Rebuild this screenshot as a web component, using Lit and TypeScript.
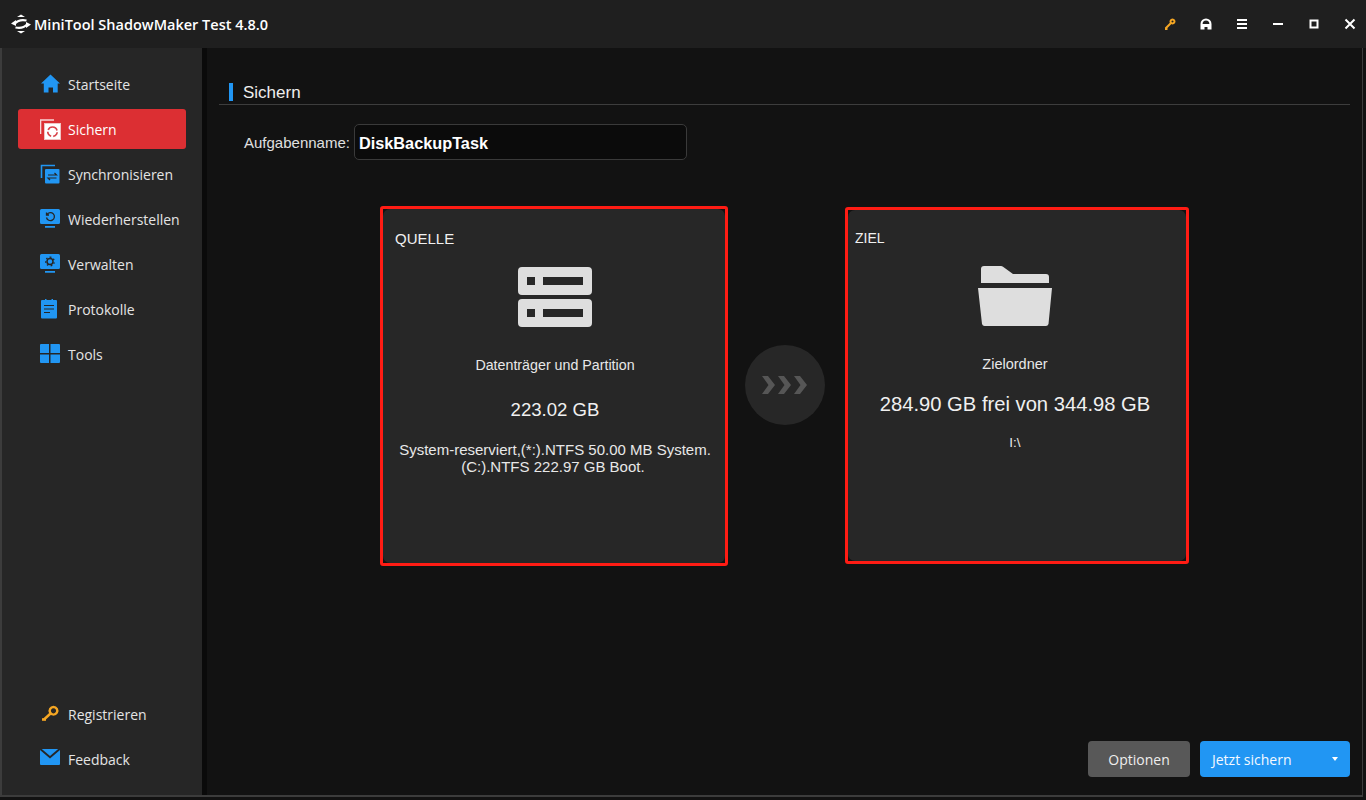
import { LitElement, css, html, svg, unsafeCSS } from "lit";
import { customElement } from "lit/decorators.js";

const BLUE = "#2196f3";

const navIcons: Record<string, unknown> = {
  home: svg`<path fill="${BLUE}" d="M10.500 .500 20 9.500h-2.300v9h-4.700V13.500H8.500v5H3.800v-9H1z"/>`,
  backup: svg`<path fill="none" stroke="#fff" stroke-opacity=".8" stroke-width="1.600" d="M.500 15V1H14"/><rect x="4.500" y="4.500" width="16" height="16" fill="#fff" stroke="#f0c4c4"/><path fill="none" stroke="#d8434a" stroke-width="1.700" stroke-dasharray="6 1.800" d="M12.500 8a4.700 4.700 0 1 1-.01 0"/>`,
  sync: svg`<path fill="none" stroke="${BLUE}" stroke-width="1.600" d="M1.500 14V1.500H15"/><rect x="5" y="5" width="14.500" height="14.500" rx="1" fill="${BLUE}"/><path fill="none" stroke="#262626" stroke-width="1.200" d="M8 11h8.500l-2-2M16.500 14H8l2 2"/>`,
  restore: svg`<path fill="${BLUE}" d="M1.500 0h17A1.500 1.500 0 0 1 20 1.500v12a1.500 1.500 0 0 1-1.500 1.500h-17A1.500 1.500 0 0 1 0 13.500v-12A1.500 1.500 0 0 1 1.500 0zM5 17h10v1.800H5z"/><path fill="none" stroke="#262626" stroke-width="1.300" d="M7 5.500a4 4 0 1 1-.5 3M6.500 3.500v2.500h2.500"/>`,
  manage: svg`<path fill="${BLUE}" d="M1.500 0h17A1.500 1.500 0 0 1 20 1.500v12a1.500 1.500 0 0 1-1.500 1.500h-17A1.500 1.500 0 0 1 0 13.500v-12A1.500 1.500 0 0 1 1.500 0zM5 17h10v1.800H5z"/><circle cx="10" cy="7.500" r="3" fill="none" stroke="#262626" stroke-width="1.500"/><path fill="none" stroke="#262626" stroke-width="1.300" stroke-dasharray="1.500 2.200" d="M10 3.200a4.300 4.300 0 1 1-.01 0"/>`,
  logs: svg`<path fill="${BLUE}" d="M2 1h3V0h1.500v1h5V0H13v1h3a1 1 0 0 1 1 1v16.500a1 1 0 0 1-1 1H2a1 1 0 0 1-1-1V2a1 1 0 0 1 1-1z"/><path stroke="#262626" stroke-width="1.200" d="M4 6.500h10M4 10h10M4 13.500h6"/>`,
  tools: svg`<path fill="${BLUE}" d="M1 0h8v9H0V1a1 1 0 0 1 1-1zM10.500 0H19a1 1 0 0 1 1 1v8h-9.500zM0 10.500h9V19H1a1 1 0 0 1-1-1zM10.500 10.500H20V18a1 1 0 0 1-1 1h-8.500z"/>`,
  key: svg`<path fill="none" stroke="#f5a623" stroke-width="2.400" d="M13.500 3a3.800 3.800 0 1 1-.01 0zM10.500 9.500 4 15.500"/><path fill="none" stroke="#f5a623" stroke-width="2.600" d="M2 15.500h4"/>`,
  mail: svg`<path fill="${BLUE}" d="M0 1 10 9.500 20 1v14a1 1 0 0 1-1 1H1a1 1 0 0 1-1-1z"/><path fill="${BLUE}" d="M1.800 0h16.400L10 7z"/>`,
};

const navTop = [
  { key: "home", label: "Startseite" },
  { key: "backup", label: "Sichern", active: true },
  { key: "sync", label: "Synchronisieren" },
  { key: "restore", label: "Wiederherstellen" },
  { key: "manage", label: "Verwalten" },
  { key: "logs", label: "Protokolle" },
  { key: "tools", label: "Tools" },
];

const navBottom = [
  { key: "key", label: "Registrieren" },
  { key: "mail", label: "Feedback" },
];

@customElement("app-root")
export class AppRoot extends LitElement {
  static styles = css`
    :host {
      display: flex;
      flex-direction: column;
      width: 1366px;
      height: 800px;
      overflow: hidden;
      background: #121212;
      color: #e6e6e6;
      font-family: "Liberation Sans", sans-serif;
    }

    /* title bar */
    .titlebar {
      height: 48px;
      flex: none;
      display: flex;
      align-items: center;
      background: #1f1f1f;
      padding-left: 11px;
    }

    .titlebar .title {
      margin-left: 3px;
      font-family: "Open Sans", sans-serif;
      font-weight: 600;
      font-size: 14.5px;
      color: #fff;
      white-space: nowrap;
    }

    .win-btns {
      margin-left: auto;
      display: flex;
      align-items: center;
      padding-right: 10px;
      gap: 24px;
    }

    .win-btns svg {
      display: block;
      width: 12px;
      height: 12px;
    }

    /* body */
    .body {
      flex: 1;
      display: flex;
      min-height: 0;
      margin: 0 3px 3px 0;
      border-bottom: 2px solid #3c3c3c;
      border-right: 1px solid #3c3c3c;
    }

    .sidebar {
      width: 207px;
      flex: none;
      box-sizing: border-box;
      display: flex;
      flex-direction: column;
      justify-content: space-between;
      padding: 16px 16px 16px;
      background: #262626;
      border-left: 2px solid #3c3c3c;
      border-right: 5px solid #0a0a0a;
    }

    .nav {
      display: flex;
      flex-direction: column;
      gap: 5px;
    }

    .item {
      height: 40px;
      display: flex;
      align-items: center;
      border-radius: 3px;
      padding-left: 22px;
      font-family: "Open Sans", sans-serif;
      font-size: 14px;
      color: #e4e4e4;
      white-space: nowrap;
    }

    .item.active {
      background: #dc2f33;
      color: #fff;
    }

    .item svg {
      width: 21px;
      height: 21px;
      flex: none;
      margin-right: 7px;
    }

    /* main */
    .main {
      flex: 1;
      min-width: 0;
      display: flex;
      flex-direction: column;
      padding: 32px 12px 18px;
    }

    .heading {
      display: flex;
      align-items: center;
      gap: 10px;
      height: 24px;
      padding-left: 10px;
      border-bottom: 1px solid #3d3d3d;
      font-size: 17px;
      color: #eee;
    }

    .heading::before {
      content: "";
      width: 4px;
      height: 18px;
      background: ${unsafeCSS(BLUE)};
    }

    .heading span {
      padding-top: 1px;
    }

    .task {
      display: flex;
      align-items: center;
      gap: 4px;
      margin: 19px 0 0 25px;
      font-size: 15px;
      color: #e0e0e0;
    }

    .task .field {
      width: 333px;
      height: 36px;
      box-sizing: border-box;
      display: flex;
      align-items: center;
      padding: 2px 0 0 4px;
      border: 1px solid #3a3a3a;
      border-radius: 5px;
      background: #0b0b0b;
      font-size: 16.3px;
      font-weight: 700;
      color: #fff;
    }

    .panels {
      display: flex;
      align-items: flex-start;
      margin: 46px 0 0 161px;
    }

    .card {
      box-sizing: border-box;
      border: 3px solid #ff1c14;
      border-radius: 3px;
      background: #121212;
      flex: none;
    }

    .card .inner {
      box-sizing: border-box;
      height: 100%;
      display: flex;
      flex-direction: column;
      align-items: center;
      border-radius: 7px;
      background: #272727;
      text-align: center;
    }

    .card.source {
      width: 348px;
      height: 360px;
    }

    .card.source .inner {
      padding-left: 2px;
    }

    .card.target {
      width: 344px;
      height: 357px;
      margin-top: 1px;
    }

    .card.target .inner {
      padding-right: 4px;
    }

    .card h3 {
      align-self: flex-start;
      margin: 0;
      font-weight: 400;
      line-height: 16px;
      color: #f0f0f0;
    }

    .source h3 {
      padding: 22px 0 0 10px;
      font-size: 15px;
    }

    .target h3 {
      padding: 20px 0 0 7px;
      font-size: 14px;
    }

    .card .glyph {
      display: block;
      width: 74px;
      height: 60px;
      margin-top: 20px;
      flex: none;
    }

    .card .kind {
      margin-top: 30px;
      line-height: 16px;
      color: #e8e8e8;
    }

    .source .kind {
      font-size: 14.25px;
    }

    .target .kind {
      font-size: 14.5px;
    }

    .card .size {
      color: #f0f0f0;
    }

    .source .size {
      margin-top: 26px;
      font-size: 18.6px;
      line-height: 21px;
    }

    .target .size {
      margin-top: 21px;
      font-size: 20.2px;
      line-height: 23px;
    }

    .card .detail {
      line-height: 17px;
      color: #e8e8e8;
    }

    .source .detail {
      margin-top: 21px;
      font-size: 15px;
    }

    .target .detail {
      margin-top: 18px;
      font-size: 13.5px;
    }

    .arrow {
      flex: none;
      width: 80px;
      height: 80px;
      margin: 139px 20px 0 17px;
      border-radius: 50%;
      background: #272727;
      display: flex;
      align-items: center;
      justify-content: center;
    }

    .arrow svg {
      display: block;
      width: 46px;
      height: 18px;
    }

    .actions {
      margin-top: auto;
      display: flex;
      justify-content: flex-end;
      gap: 10px;
    }

    .btn {
      height: 36px;
      box-sizing: border-box;
      display: flex;
      align-items: center;
      border-radius: 4px;
      font-family: "Open Sans", sans-serif;
      font-size: 14px;
      color: #eee;
    }

    .btn.options {
      width: 102px;
      justify-content: center;
      background: #585858;
    }

    .btn.primary {
      width: 150px;
      padding: 0 12px;
      justify-content: space-between;
      background: ${unsafeCSS(BLUE)};
      color: #f4f9ff;
    }

    .btn .caret {
      width: 0;
      height: 0;
      border-left: 3.5px solid transparent;
      border-right: 3.5px solid transparent;
      border-top: 4.5px solid #fff;
    }
  `;

  private renderItem(item: { key: string; label: string; active?: boolean }) {
    return html`
      <div class="item ${item.active ? "active" : ""}">
        <svg viewBox="0 0 21 21">${navIcons[item.key]}</svg>
        ${item.label}
      </div>
    `;
  }

  render() {
    return html`
      <div class="titlebar">
        <svg width="20" height="20" viewBox="0 0 20 20">
          <path fill="none" stroke="#fff" stroke-width="2" d="M4 9.500Q8 5 15.500 6.500M16 10.500Q12 15 4.500 13.500"/>
          <path fill="#fff" d="M10 .500l4 2.500H6zM10 19.500l4-2.500H6zM0 9.500l5-3.500v6zM20 10.500l-5 3.500V8z"/>
        </svg>
        <span class="title">MiniTool ShadowMaker Test 4.8.0</span>
        <div class="win-btns">
          <svg viewBox="0 0 12 12"><path fill="none" stroke="#f5a623" stroke-width="2" d="M8.500 1.500a2 2 0 1 1-.01 0zM6.500 5.500 1.500 10.500M1 11h2.500"/></svg>
          <svg viewBox="0 0 12 12"><path fill="#fff" fill-rule="evenodd" d="M6 .500A5.500 5.500 0 0 1 11.500 6v5.500h-4V9h-3v2.500h-4V6A5.500 5.500 0 0 1 6 .500zM6 2.500A3.500 3.500 0 0 0 2.600 6h6.800A3.500 3.500 0 0 0 6 2.500z"/></svg>
          <svg viewBox="0 0 12 12"><path stroke="#fff" stroke-width="2" d="M1 2h10M1 6h10M1 10h10"/></svg>
          <svg viewBox="0 0 12 12"><path stroke="#fff" stroke-width="2" d="M1 6h10"/></svg>
          <svg viewBox="0 0 12 12"><rect x="2.500" y="2.500" width="7" height="7" fill="none" stroke="#fff" stroke-width="2"/></svg>
          <svg viewBox="0 0 12 12"><path stroke="#fff" stroke-width="2" d="M1.500 1.500l9 9M10.500 1.500l-9 9"/></svg>
        </div>
      </div>
      <div class="body">
        <aside class="sidebar">
          <div class="nav">${navTop.map((i) => this.renderItem(i))}</div>
          <div class="nav">${navBottom.map((i) => this.renderItem(i))}</div>
        </aside>
        <main class="main">
          <div class="heading"><span>Sichern</span></div>
          <div class="task">
            <span>Aufgabenname:</span>
            <div class="field">DiskBackupTask</div>
          </div>
          <div class="panels">
            <section class="card source">
              <div class="inner">
                <h3>QUELLE</h3>
                <svg class="glyph" viewBox="0 0 74 60">
                  <path fill="#dedede" fill-rule="evenodd" d="M4 0h66a4 4 0 0 1 4 4v20a4 4 0 0 1-4 4H4a4 4 0 0 1-4-4V4a4 4 0 0 1 4-4zm5 10v8h8v-8zm16 0v8h40v-8zM4 32h66a4 4 0 0 1 4 4v20a4 4 0 0 1-4 4H4a4 4 0 0 1-4-4V36a4 4 0 0 1 4-4zm5 10v8h8v-8zm16 0v8h40v-8z"/>
                </svg>
                <div class="kind">Datenträger und Partition</div>
                <div class="size">223.02 GB</div>
                <div class="detail">System-reserviert,(*:).NTFS 50.00 MB System.<br />(C:).NTFS 222.97 GB Boot.&nbsp;</div>
              </div>
            </section>
            <div class="arrow">
              <svg viewBox="0 0 46 18">
                <path fill="#565656" d="M0 0h6l7 9-7 9H0l6.500-9zM16 0h6l7 9-7 9h-6l6.500-9zM32 0h6l7 9-7 9h-6l6.500-9z"/>
              </svg>
            </div>
            <section class="card target">
              <div class="inner">
                <h3>ZIEL</h3>
                <svg class="glyph" viewBox="0 0 74 60">
                  <path fill="#dedede" d="M6 0h17a3 3 0 0 1 2 .800L35 8h33a3 3 0 0 1 3 3v6H3V3a3 3 0 0 1 3-3zM0 22h74l-3.500 36a3 3 0 0 1-3 2H7a3 3 0 0 1-3-2z"/>
                </svg>
                <div class="kind">Zielordner</div>
                <div class="size">284.90 GB frei von 344.98 GB</div>
                <div class="detail">I:\\</div>
              </div>
            </section>
          </div>
          <div class="actions">
            <div class="btn options">Optionen</div>
            <div class="btn primary">Jetzt sichern<span class="caret"></span></div>
          </div>
        </main>
      </div>
    `;
  }
}
